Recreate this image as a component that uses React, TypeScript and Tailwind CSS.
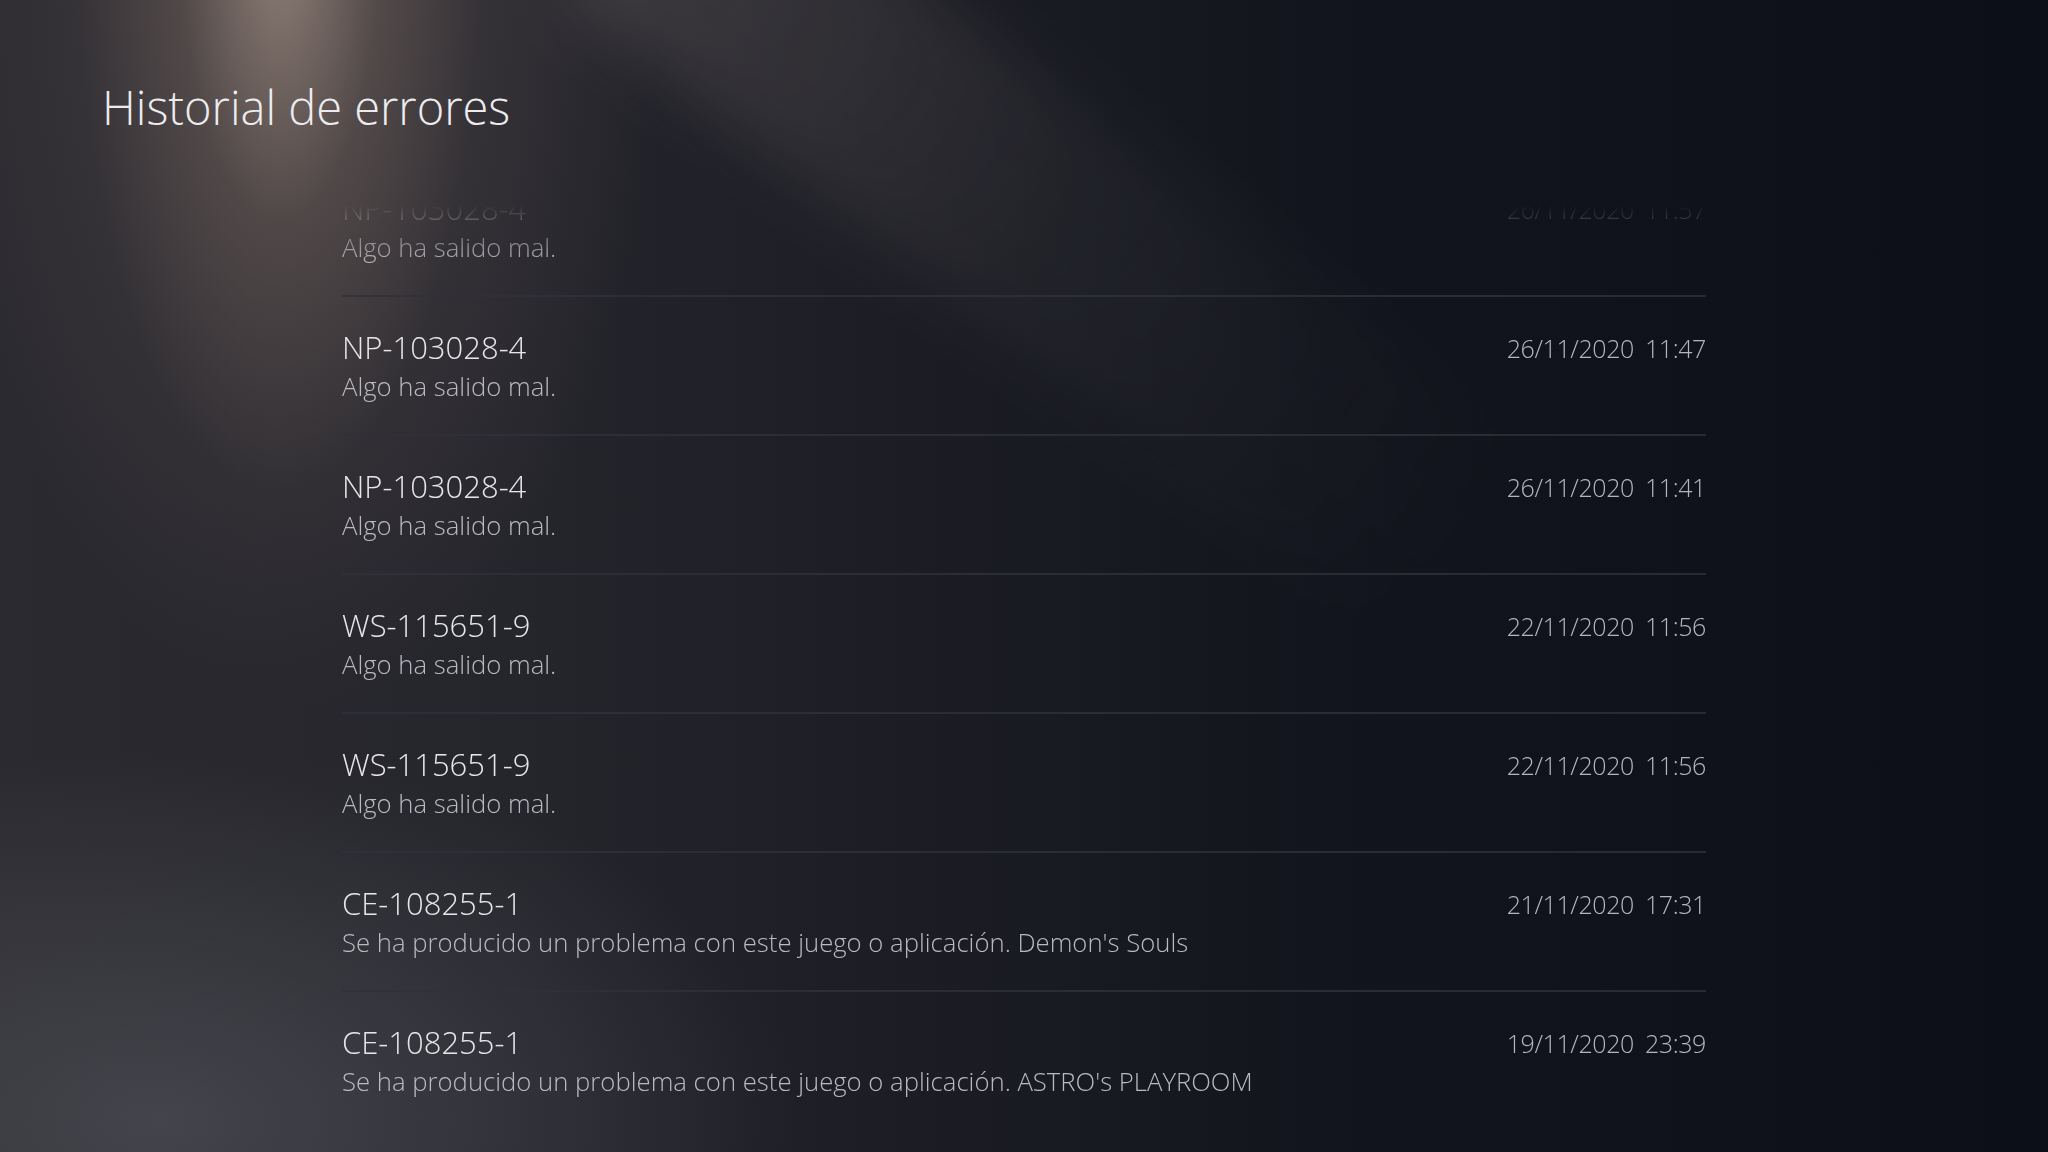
import React from 'react';

type ErrorEntry = {
  code: string;
  message: string;
  date: string;
  time: string;
};

const errors: ErrorEntry[] = [
  { code: 'NP-103028-4', message: 'Algo ha salido mal.', date: '26/11/2020', time: '11:57' },
  { code: 'NP-103028-4', message: 'Algo ha salido mal.', date: '26/11/2020', time: '11:47' },
  { code: 'NP-103028-4', message: 'Algo ha salido mal.', date: '26/11/2020', time: '11:41' },
  { code: 'WS-115651-9', message: 'Algo ha salido mal.', date: '22/11/2020', time: '11:56' },
  { code: 'WS-115651-9', message: 'Algo ha salido mal.', date: '22/11/2020', time: '11:56' },
  {
    code: 'CE-108255-1',
    message: "Se ha producido un problema con este juego o aplicación. Demon's Souls",
    date: '21/11/2020',
    time: '17:31',
  },
  {
    code: 'CE-108255-1',
    message: "Se ha producido un problema con este juego o aplicación. ASTRO's PLAYROOM",
    date: '19/11/2020',
    time: '23:39',
  },
];

const ErrorRow: React.FC<{ entry: ErrorEntry; last: boolean }> = ({ entry, last }) => {
  return (
    <div
      className={`h-[139px] flex items-start justify-between pt-[29px] ${
        last ? '' : 'border-b-2 border-[#30323a]/80'
      }`}
    >
      <div className="flex flex-col">
        <span className="text-[31px] leading-[42px] font-light text-[#e6e6ea]">{entry.code}</span>
        <span className="text-[25.7px] leading-[38px] font-light text-[#b9b9c0]">{entry.message}</span>
      </div>
      <div className="flex gap-[11px] text-[25px] leading-[40px] font-light tracking-[-0.4px] text-[#b4b6be] pt-[2px]">
        <span>{entry.date}</span>
        <span>{entry.time}</span>
      </div>
    </div>
  );
};

export default function App() {
  return (
    <div className="relative w-full h-[1152px] overflow-hidden font-['Open_Sans','Lato',sans-serif] bg-[radial-gradient(ellipse_200px_560px_at_280px_-60px,rgba(170,150,138,0.7),rgba(125,108,100,0.3)_50%,transparent_100%),radial-gradient(ellipse_480px_1000px_at_300px_-40px,rgba(110,96,92,0.45),transparent_75%),radial-gradient(ellipse_800px_460px_at_160px_1120px,rgba(85,87,94,0.6),transparent_80%),linear-gradient(90deg,#2b2a30_0%,#25252c_25%,#1c1d24_45%,#12151d_65%,#0c0f18_100%)]">
      {/* diagonal light beam */}
      <div className="pointer-events-none absolute left-[930px] top-[-300px] w-[230px] h-[1050px] rotate-[-52deg] blur-[30px] bg-[linear-gradient(to_bottom,rgba(165,150,145,0.2),rgba(140,130,130,0.08)_50%,transparent)]" />

      <div className="relative flex flex-col h-full">
        <div className="pl-[102px] pt-[84px] h-[205px] shrink-0">
          <h1 className="text-[47px] leading-[46px] font-light text-[#ececef]">Historial de errores</h1>
        </div>
        <div className="flex-1 overflow-hidden [mask-image:linear-gradient(to_bottom,transparent_0px,rgba(0,0,0,0.25)_15px,black_60px)]">
          <div className="ml-[342px] w-[1364px] mt-[-47px]">
            {errors.map((e, i) => (
              <ErrorRow key={i} entry={e} last={i === errors.length - 1} />
            ))}
          </div>
        </div>
      </div>
    </div>
  );
}
